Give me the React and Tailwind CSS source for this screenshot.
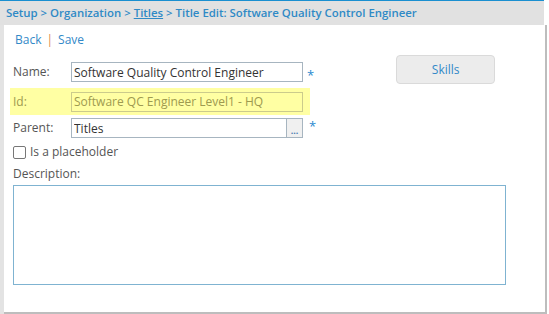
import { useState } from 'react';

function Field({ label, children, highlight, className = '' }) {
  return (
    <div className={`flex items-center ${highlight ? 'h-[27px] bg-[#ffffa3] -ml-[3px] pl-[3px] w-[300px]' : 'h-[26px]'} ${className}`}>
      <label className={`w-[58px] text-[12px] ${highlight ? 'text-[#9e9a50]' : 'text-[#555]'}`}>{label}</label>
      {children}
    </div>
  );
}

export default function App() {
  const [placeholder, setPlaceholder] = useState(false);

  return (
    <div className="w-[549px] h-[314px] bg-white font-['Open_Sans',sans-serif] overflow-hidden">
      <div className="flex h-[314px]">
        <div className="w-[4px] bg-[#e3e3e3]" />
        <div className="flex flex-col w-[543px] h-[314px]">
          {/* breadcrumb */}
          <div className="-ml-[4px] w-[544px] border-t border-[#1a8fd0] bg-[#e1e1e1] h-[25px] flex items-center pl-[6px] text-[11.4px] font-semibold text-[#2f8ac6]">
            <span>Setup &gt; Organization &gt; </span>
            <span className="underline mx-[3px]">Titles</span>
            <span>&gt; Title Edit: Software Quality Control Engineer</span>
          </div>
          <div className="flex flex-1 border-r-2 border-b-2 border-[#bdbdbd]">
            <div className="flex-1 pl-[9px] pt-[6px]">
              <div className="flex items-center gap-[5px] text-[12px] text-[#3389c8] pl-[2px]">
                <span>Back</span>
                <span className="text-[#e0874a]">|</span>
                <span>Save</span>
              </div>
              <div className="flex mt-[10px]">
                <div className="flex flex-col">
                  <Field label="Name:" className="mb-[3px]">
                    <input
                      readOnly
                      value="Software Quality Control Engineer"
                      className="w-[232px] h-[20px] border border-[#a7b5c0] px-[2px] text-[12px] text-[#333] outline-none"
                    />
                    <span className="ml-[4px] mt-[6px] text-[#2a8ad0] text-[13px] leading-none">*</span>
                  </Field>
                  <Field label="Id:" highlight>
                    <input
                      readOnly
                      value="Software QC Engineer Level1 - HQ"
                      className="w-[232px] h-[20px] border border-[#cbcb8c] bg-[#ffffa3] px-[2px] text-[12px] text-[#9e9a50] outline-none"
                    />
                  </Field>
                  <Field label="Parent:">
                    <input
                      readOnly
                      value="Titles"
                      className="w-[216px] h-[20px] border border-[#a7b5c0] px-[2px] text-[12px] text-[#333] outline-none"
                    />
                    <button className="w-[16px] h-[20px] border border-l-0 border-[#a7b5c0] bg-[#f0f0f0] text-[9px] font-bold text-[#4a7ab0] leading-none pt-[5px]">...</button>
                    <span className="ml-[6px] -mt-[4px] text-[#2a8ad0] text-[13px] leading-none">*</span>
                  </Field>
                </div>
                <button className="ml-[80px] -mt-[4px] w-[99px] h-[29px] rounded-[4px] border border-[#dadada] bg-[#ececec] text-[12px] text-[#3389c8]">Skills</button>
              </div>
              <label className="flex items-center gap-[4px] mt-[2px] text-[12px] text-[#555]">
                <input
                  type="checkbox"
                  checked={placeholder}
                  onChange={() => setPlaceholder(!placeholder)}
                  className="appearance-none w-[13px] h-[13px] border border-[#777] rounded-[2px] bg-white"
                />
                <span>Is a placeholder</span>
              </label>
              <div className="mt-[4px] text-[12px] text-[#555]">Description:</div>
              <textarea className="mt-[2px] w-[493px] h-[100px] border border-[#7fb3d1] resize-none outline-none block" />
            </div>
          </div>
        </div>
      </div>
    </div>
  );
}
